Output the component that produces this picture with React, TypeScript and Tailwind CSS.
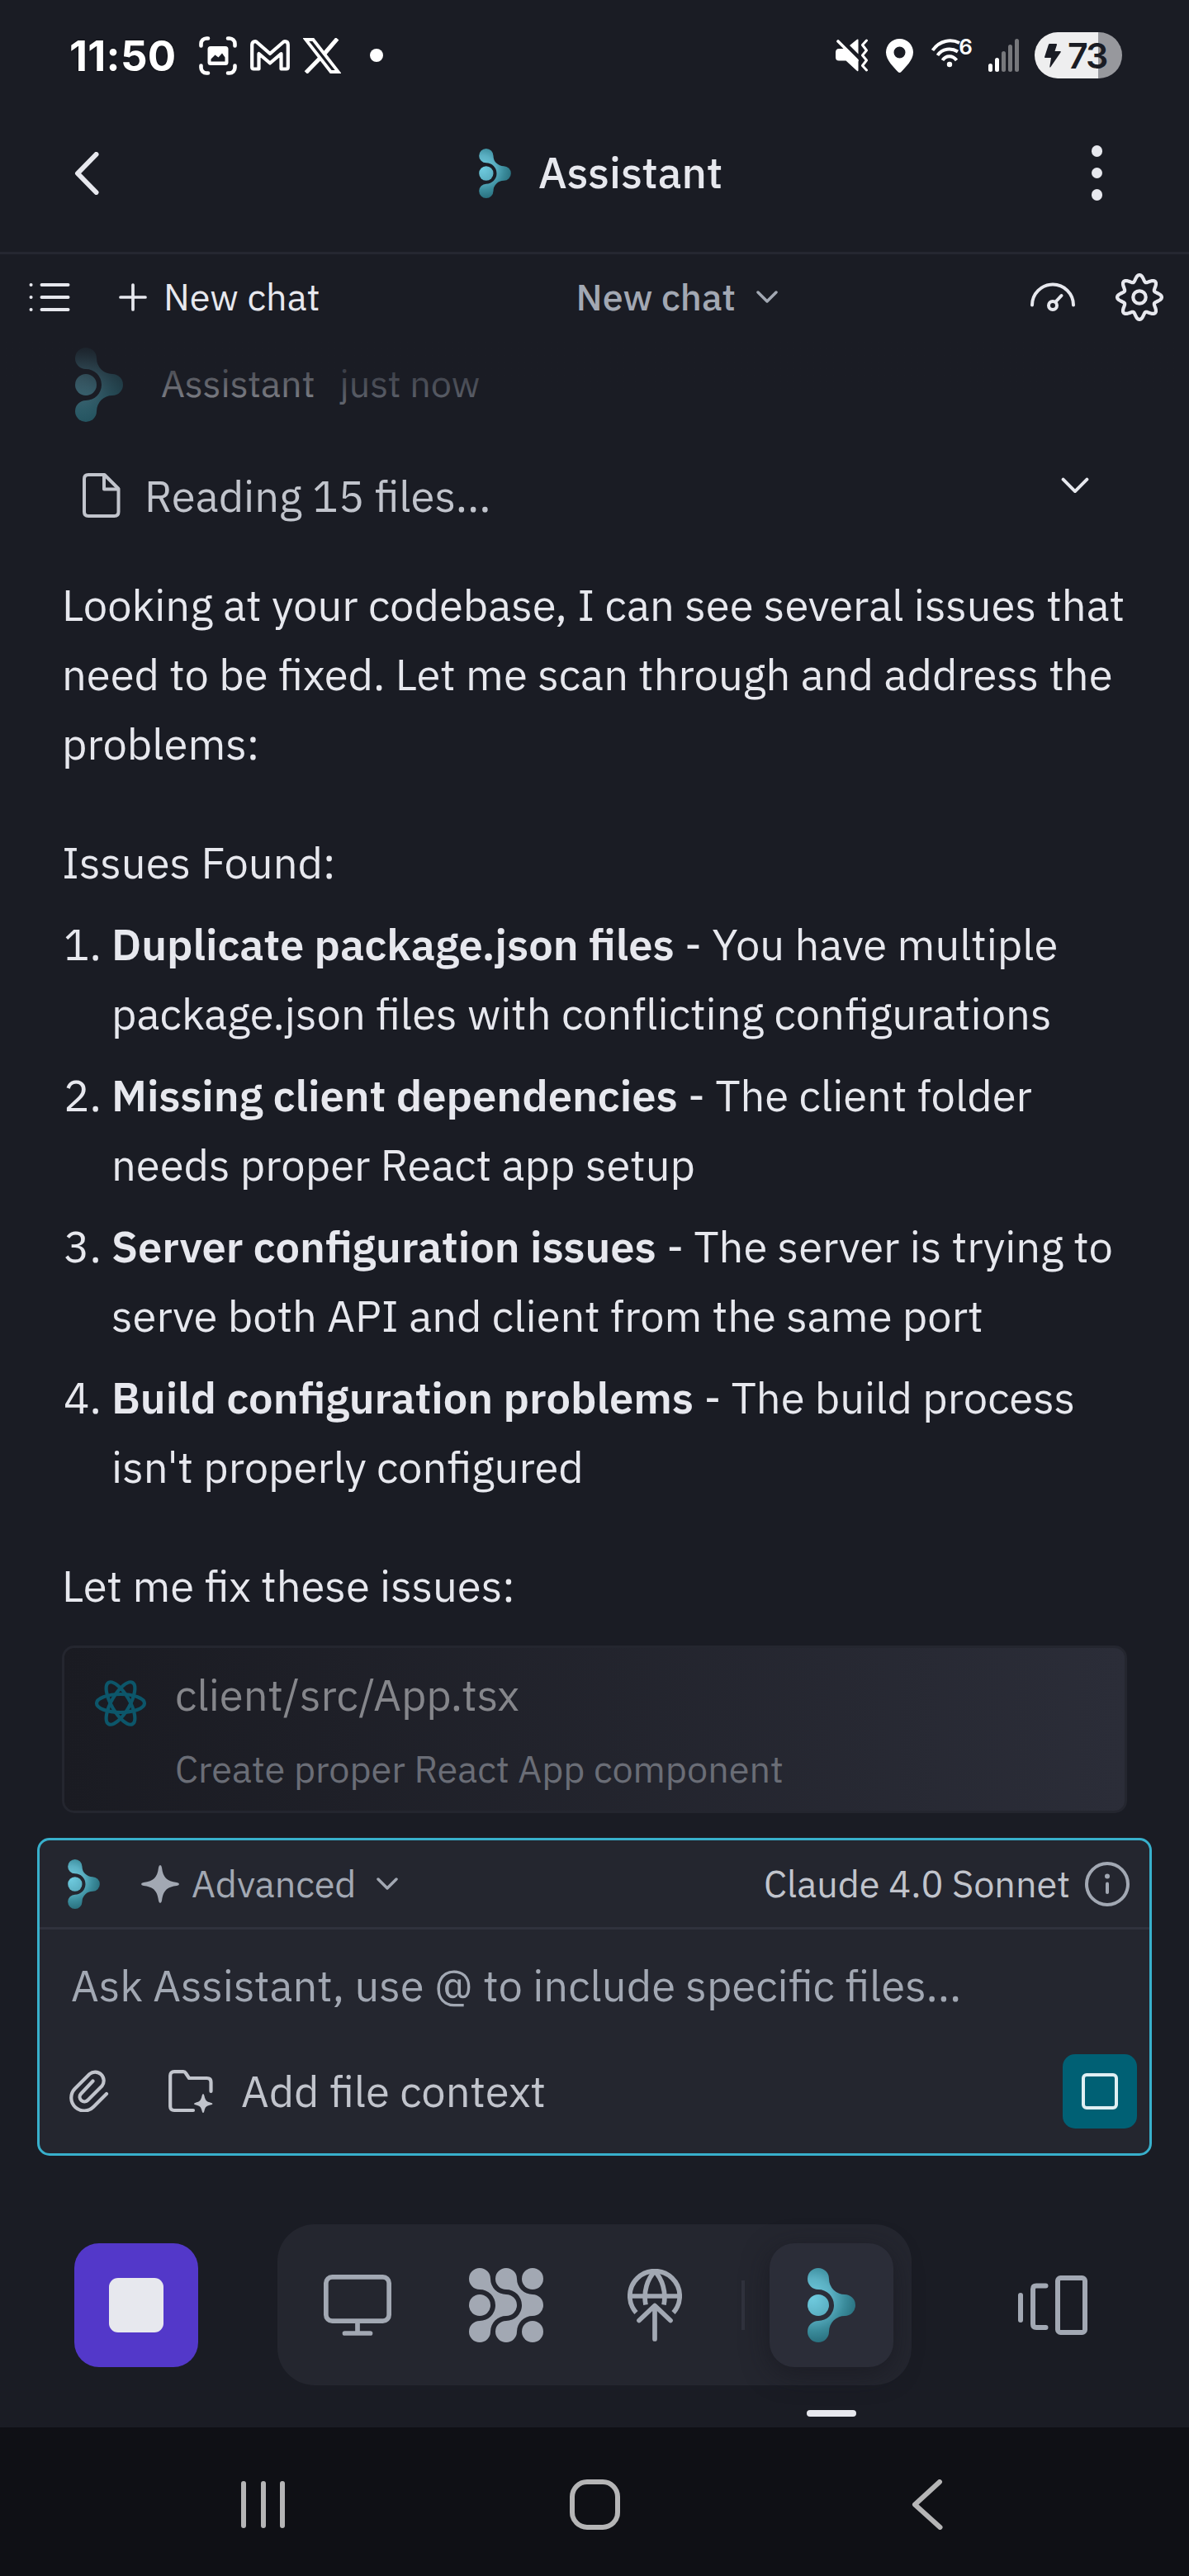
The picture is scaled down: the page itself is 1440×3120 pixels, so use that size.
import type { ReactNode } from 'react';

const LOBE_PATH =
  'M26 13A19 19 0 0 0 45 32A13 13 0 0 1 45 58A19 19 0 0 0 26 77A13 13 0 1 1 13 64A19 19 0 0 0 13 26A13 13 0 1 1 26 13Z';

function AssistantLogo({ id, className }: { id: string; className: string }) {
  return (
    <svg viewBox="0 0 58 90" className={className} aria-hidden="true">
      <defs>
        <radialGradient id={id} gradientUnits="userSpaceOnUse" cx="6" cy="36" r="66">
          <stop offset="0" stopColor="#6fcbdf" />
          <stop offset="0.35" stopColor="#5bb0c3" />
          <stop offset="0.6" stopColor="#3b8c9c" />
          <stop offset="1" stopColor="#1c5b68" />
        </radialGradient>
      </defs>
      <g fill={`url(#${id})`}>
        <path d={LOBE_PATH} />
        <circle cx="13" cy="45" r="13" />
      </g>
    </svg>
  );
}

const GEAR_PATH =
  Array.from({ length: 96 }, (_, i) => {
    const a = (i / 96) * Math.PI * 2;
    const r = 23.2 + 3.8 * Math.cos(a * 8);
    return `${i ? 'L' : 'M'}${(30 + r * Math.sin(a)).toFixed(2)} ${(30 - r * Math.cos(a)).toFixed(2)}`;
  }).join('') + 'Z';

function ChevronDown({ className, stroke = 3.5 }: { className: string; stroke?: number }) {
  return (
    <svg viewBox="0 0 26 16" className={className} fill="none" stroke="currentColor" strokeWidth={stroke} strokeLinecap="round" strokeLinejoin="round">
      <path d="M2 2L13 13L24 2" />
    </svg>
  );
}

function StatusBar() {
  return (
    <div className="flex h-[134px] items-center pr-[81px] pl-[84px]">
      <span className="w-[129px] font-[Inter] text-[51px] leading-none font-bold tracking-[0.3px] whitespace-nowrap text-white [text-shadow:0_0_2px_#000]">11:50</span>
      <svg viewBox="0 0 46 47" className="ml-[28px] h-[47px] w-[46px]" fill="none" stroke="#fff" strokeWidth="4.6" strokeLinecap="round">
        <path d="M2.5 11.5V9a6.5 6.5 0 0 1 6.5-6.5h2M35 2.5h2A6.5 6.5 0 0 1 43.5 9v2.5M43.5 35.5V38a6.5 6.5 0 0 1-6.5 6.5h-2M11 44.5H9A6.5 6.5 0 0 1 2.5 38v-2.5" />
        <rect x="10.5" y="12" width="25" height="23" rx="3.5" fill="#fff" stroke="none" />
        <path d="M14.5 30.5v-3l5-5 4 3 4.5-5 3.5 5v5z" fill="#1a1c24" stroke="none" />
      </svg>
      <svg viewBox="0 0 48 38" className="ml-[16px] h-[38px] w-[48px]" fill="none" stroke="#fff" strokeWidth="4.2" strokeLinejoin="round">
        <path d="M2.2 6.2Q2.2 2.2 6.2 2.2Q7.2 2.2 8.5 3.5L24 17L39.5 3.5Q40.8 2.2 42 2.2Q45.8 2.2 45.8 6.2V33.5Q45.8 35.5 43.8 35.5H37.5V17L24 28.5L10.500 17V35.500H4.200Q2.200 35.500 2.200 33.500Z" />
      </svg>
      <svg viewBox="0 0 46 43" className="ml-[16px] h-[43px] w-[46px]" fill="none" stroke="#fff" strokeWidth="3.8">
        <path d="M3.3 2H12.3L42.7 41H33.7Z" />
        <path d="M41.5 0.8L25.5 19.5M20 25L3.5 42" strokeWidth="5" />
      </svg>
      <span className="ml-[35px] size-4 rounded-full bg-white" />
      <div className="ml-auto flex items-center">
        <svg viewBox="0 0 40 40" className="h-[40px] w-[40px]" fill="#fff">
          <path d="M0 16.500Q0 12 4 12H12L27.500 26.500V38Q27.500 40 25.800 38.700L12.500 26.500H4Q0 26.500 0 22.500Z" />
          <path d="M17 8L26 0.800Q27.500 0 27.500 1.500V18.500Z" />
          <path d="M3 3L26 26" stroke="#fff" strokeWidth="3.600" strokeLinecap="round" />
          <path d="M37.500 2L32.500 7.500L37.500 14L32.500 20L37.500 26L32.500 32.500L37.500 38" fill="none" stroke="#fff" strokeWidth="3" strokeLinecap="round" strokeLinejoin="round" />
        </svg>
        <svg viewBox="0 0 33 41" className="ml-[21px] h-[41px] w-[33px]" fill="#fff">
          <path fillRule="evenodd" d="M16.5 0A16.3 16.3 0 0 0 0 16.5C0 26 10 35 14.5 40Q16.5 41.8 18.5 40C23 35 33 26 33 16.5A16.3 16.3 0 0 0 16.5 0ZM16.5 9.5a7 7 0 1 1 0 14a7 7 0 0 1 0-14Z" />
        </svg>
        <div className="relative ml-[22px] h-[40px] w-[50px]">
          <svg viewBox="0 0 50 40" className="h-[40px] w-[50px]" fill="none" stroke="#fff" strokeWidth="4">
            <path d="M1.5 14C10 1.500 24 0 34 5M7.500 20C13 11.500 24 10.500 32 15.500M13.500 26C17.500 19.500 26 19.500 30.500 26" />
            <circle cx="22" cy="31" r="3.2" fill="#fff" stroke="none" />
          </svg>
          <span className="absolute top-0 right-0 font-[Inter] text-[26px] leading-[20px] font-semibold text-white">6</span>
        </div>
        <div className="ml-[19px] flex h-[40px] items-end gap-[3px]">
          <span className="h-[10px] w-[5px] rounded-full bg-white" />
          <span className="h-[17px] w-[5px] rounded-full bg-white" />
          <span className="h-[25px] w-[5px] rounded-full bg-[#77787c]" />
          <span className="h-[33px] w-[5px] rounded-full bg-[#77787c]" />
          <span className="h-[40px] w-[5px] rounded-full bg-[#77787c]" />
        </div>
        <div className="ml-[19px] flex h-[56px] w-[106px] items-center rounded-full bg-[linear-gradient(90deg,#eeeeef_0_77px,#97989d_77px)] pl-[12px] text-[#1a1c24]">
          <svg viewBox="0 0 20 29" className="h-[29px] w-[20px]" fill="currentColor">
            <path d="M5 0.800Q5.400 0 6.300 0H14Q15.400 0 15 1.300L12.500 9H18.800Q20.500 9 19.500 10.500L7.500 28Q6.300 29.500 6.300 27.500L8 17H1.200Q-0.300 17 0.200 15.500Z" />
          </svg>
          <span className="ml-[8px] font-[Inter] text-[43px] leading-none font-semibold tracking-[-2px]">73</span>
        </div>
      </div>
    </div>
  );
}

function Header() {
  return (
    <div className="grid h-[174px] grid-cols-[1fr_auto_1fr] items-center border-b-[3px] border-[#252731] pr-[105px] pb-[20px] pl-[90px]">
      <svg viewBox="0 0 30 52" className="h-[52px] w-[30px]" fill="none" stroke="#e7e8ee" strokeWidth="6" strokeLinecap="round" strokeLinejoin="round">
        <path d="M26.5 3L4 26L26.5 49" />
      </svg>
      <div className="ml-[30px] flex items-center">
        <AssistantLogo id="logo-title" className="h-[60px] w-[39px]" />
        <span className="mb-[3px] ml-[33px] text-[52.5px] leading-[68px] font-medium">Assistant</span>
      </div>
      <div className="flex flex-col items-center gap-[13px] justify-self-end">
        <span className="size-[13.5px] rounded-full bg-[#e7e8ee]" />
        <span className="size-[13.5px] rounded-full bg-[#e7e8ee]" />
        <span className="size-[13.5px] rounded-full bg-[#e7e8ee]" />
      </div>
    </div>
  );
}

function ChatToolbar() {
  return (
    <div className="flex h-[104px] items-center pr-[30px] pl-[35px] text-[45px] leading-[60px]">
      <svg viewBox="0 0 50 36" className="h-[36px] w-[50px]" fill="none" stroke="#e7e8ee" strokeWidth="4" strokeLinecap="round">
        <path d="M15.5 3H47.5M15.5 18H47.5M15.5 33H47.5M2.5 3h0.1M2.5 18h0.1M2.5 33h0.1" />
      </svg>
      <svg viewBox="0 0 34 34" className="ml-[59px] h-[34px] w-[34px]" fill="none" stroke="#e7e8ee" strokeWidth="3.7" strokeLinecap="round">
        <path d="M17 2V32M2 17H32" />
      </svg>
      <span className="mb-[2px] ml-[20px]">New chat</span>
      <span className="mb-[2px] ml-[310px] font-medium text-[#a2a8b3]">New chat</span>
      <ChevronDown className="ml-[25px] h-[16px] w-[26px] text-[#a2a8b3]" />
      <svg viewBox="0 0 54 36" className="ml-auto h-[36px] w-[54px]" fill="none" stroke="#e7e8ee" strokeWidth="4" strokeLinecap="round">
        <path d="M2 27.5a25 25 0 0 1 50 0" />
        <circle cx="27" cy="28" r="5" />
        <path d="M30.5 23.5L37.5 16" />
      </svg>
      <svg viewBox="0 0 60 60" className="ml-[48px] h-[60px] w-[60px]" fill="none" stroke="#e7e8ee" strokeWidth="4.2" strokeLinejoin="round">
        <path d={GEAR_PATH} />
        <circle cx="30" cy="30" r="7.7" />
      </svg>
    </div>
  );
}

const ISSUES = [
  { title: 'Duplicate package.json files', first: 'You have multiple', rest: 'package.json files with conflicting configurations' },
  { title: 'Missing client dependencies', first: 'The client folder', rest: 'needs proper React app setup' },
  { title: 'Server configuration issues', first: 'The server is trying to', rest: 'serve both API and client from the same port' },
  { title: 'Build configuration problems', first: 'The build process', rest: "isn't properly configured" },
];

function Conversation() {
  return (
    <div className="relative h-[1814px] overflow-hidden px-[75px]">
      <div className="flex h-[108px] items-center pl-[16px] text-[45px] leading-[60px]">
        <AssistantLogo id="logo-message" className="h-[90px] w-[58px]" />
        <span className="mb-[4px] ml-[46px]">Assistant</span>
        <span className="mb-[4px] ml-[30px] text-[#a2a8b3]">just now</span>
      </div>
      <div className="pointer-events-none absolute inset-x-0 top-0 h-[150px] bg-linear-to-b from-[#1a1c24] to-[#1a1c24]/0" />

      <div className="mt-[38px] flex h-[84px] items-center pl-[25px]">
        <svg viewBox="0 0 46 54" className="h-[54px] w-[46px]" fill="none" stroke="#c1c4cc" strokeWidth="4" strokeLinejoin="round">
          <path d="M7 2H26.5L43.5 19V47Q43.5 52 38.5 52H7Q2 52 2 47V7Q2 2 7 2Z" />
          <path d="M26 2V19.5H43.5" />
        </svg>
        <span className="ml-[29px] text-[#c1c4cc]">Reading 15 files...</span>
        <ChevronDown className="mr-[46px] mb-[23px] ml-auto h-[21px] w-[34px] text-[#e7e8ee]" stroke={3} />
      </div>

      <p className="mt-[48px]">
        Looking at your codebase, I can see several issues that
        <br />
        need to be fixed. Let me scan through and address the
        <br />
        problems:
      </p>
      <p className="mt-[60px]">Issues Found:</p>
      <ol className="mt-[15px] flex flex-col gap-[15px]">
        {ISSUES.map((issue, i) => (
          <li key={issue.title} className="flex">
            <span className="w-[60px] shrink-0 pl-[2px]">{i + 1}.</span>
            <span>
              <strong className="font-semibold">{issue.title}</strong> - {issue.first}
              <br />
              {issue.rest}
            </span>
          </li>
        ))}
      </ol>
      <p className="mt-[60px]">Let me fix these issues:</p>

      <div className="mt-[31px] flex h-[203px] rounded-[15px] border-[3px] border-[#24262f] bg-linear-to-r from-[#1a1b22] to-[#2b2d38] pl-[36px]">
        <svg viewBox="-32 -29 64 58" className="mt-[38px] h-[58px] w-[64px]" fill="none" stroke="#0c566a" strokeWidth="4.2">
          <ellipse rx="29" ry="11" />
          <ellipse rx="29" ry="11" transform="rotate(60)" />
          <ellipse rx="29" ry="11" transform="rotate(120)" />
        </svg>
        <div className="mt-[11px] ml-[34px]">
          <p className="leading-[90px] text-[#85868b]">client/src/App.tsx</p>
          <p className="mt-[2px] text-[45px] leading-[86px] text-[#6a6d76]">Create proper React App component</p>
        </div>
      </div>
    </div>
  );
}

function Composer() {
  return (
    <div className="mx-[45px] h-[385px] rounded-[15px] border-[3px] border-[#38b0cc] bg-[#24262f]">
      <div className="flex h-[108px] items-center border-b-[3px] border-[#30323d] pr-[24px] pl-[34px] text-[45px] leading-[60px]">
        <AssistantLogo id="logo-composer" className="h-[60px] w-[39px]" />
        <svg viewBox="0 0 46 46" className="ml-[50px] h-[46px] w-[46px]" fill="#a2a8b3">
          <path d="M23 0Q24.5 0 25 3C26.5 15 31 19.5 43 21Q46 21.5 46 23Q46 24.5 43 25C31 26.5 26.5 31 25 43Q24.5 46 23 46Q21.5 46 21 43C19.5 31 15 26.5 3 25Q0 24.5 0 23Q0 21.5 3 21C15 19.5 19.5 15 21 3Q21.5 0 23 0Z" />
        </svg>
        <span className="mb-[2px] ml-[15px] text-[#a2a8b3]">Advanced</span>
        <ChevronDown className="ml-[25px] h-[16px] w-[26px] text-[#a2a8b3]" />
        <span className="mb-[2px] ml-auto text-[#c1c4cc]">Claude 4.0 Sonnet</span>
        <svg viewBox="0 0 54 54" className="ml-[18px] h-[54px] w-[54px]" fill="none" stroke="#a2a8b3" strokeWidth="4" strokeLinecap="round">
          <circle cx="27" cy="27" r="25" />
          <path d="M27 26.5V37" />
          <circle cx="27" cy="17.5" r="3" fill="#a2a8b3" stroke="none" />
        </svg>
      </div>
      <p className="mt-[25px] pl-[38px] text-[#a2a8b3]">Ask Assistant, use @ to include specific files...</p>
      <div className="mt-[42px] flex h-[90px] items-center pr-[15px] pl-[36px] text-[#c1c4cc]">
        <svg viewBox="0 0 48 52" className="mb-[2px] h-[52px] w-[48px]" fill="none" stroke="currentColor" strokeWidth="4.2" strokeLinecap="round" strokeLinejoin="round">
          <path d="M45 30L29.5 45.5A15.5 15.5 0 0 1 6.5 24L24.5 6A10.5 10.5 0 0 1 39.5 20.5L22.5 37.5A5.5 5.5 0 0 1 14 30L28.5 14.5" />
        </svg>
        <svg viewBox="0 0 54 52" className="ml-[72px] h-[52px] w-[54px]" fill="none" stroke="currentColor" strokeWidth="4.2" strokeLinecap="round" strokeLinejoin="round">
          <path d="M30 49H7Q2.2 49 2.2 44.2V7Q2.2 2.2 7 2.2H18Q20 2.2 21 4L25 10H46.5Q51.5 10 51.5 15V26" />
          <path d="M42 29Q43 29 43.5 31.5C44.5 36.5 46 38.5 50.5 39.5Q53.5 40 53.5 41Q53.5 42 50.5 42.5C46 43.5 44.5 45 43.5 49.5Q43 52 42 52Q41 52 40.5 49.5C39.5 45 38 43.5 33.5 42.5Q31 42 31 41Q31 40 33.5 39.5C38 38.5 39.5 36.5 40.5 31.5Q41 29 42 29Z" fill="currentColor" stroke="none" />
        </svg>
        <span className="mb-[2px] ml-[34px]">Add file context</span>
        <div className="ml-auto flex size-[90px] items-center justify-center rounded-[15px] bg-[#006074]">
          <div className="size-[44px] rounded-[6px] border-4 border-[#e0eff3]" />
        </div>
      </div>
    </div>
  );
}

function Tab({ children, active = false }: { children: ReactNode; active?: boolean }) {
  return (
    <div
      className={
        active
          ? 'flex size-[150px] items-center justify-center rounded-[30px] bg-[#2b2d38] shadow-[0_8px_32px_rgba(20,20,28,0.55)]'
          : 'flex size-[150px] items-center justify-center'
      }
    >
      {children}
    </div>
  );
}

function Dock() {
  return (
    <div className="flex h-[329px] items-start pt-[83px] pl-[90px]">
      <div className="mt-[23px] flex size-[150px] items-center justify-center rounded-[30px] bg-[#5338c9]">
        <div className="size-[66px] rounded-[11px] bg-[#e7e8ee]" />
      </div>
      <div className="ml-[96px] flex h-[195px] items-center gap-[30px] rounded-[45px] bg-[#24262f] px-[22px]">
        <Tab>
          <svg viewBox="0 0 82 74" className="h-[74px] w-[82px]" fill="none" stroke="#a2a8b3" strokeWidth="5.7" strokeLinecap="round">
            <rect x="2.85" y="2.85" width="76.3" height="53.3" rx="7.5" />
            <path d="M41 57V71M25.5 71H56.5" />
          </svg>
        </Tab>
        <Tab>
          <svg viewBox="0 0 90 90" className="size-[90px]" fill="#a2a8b3">
            <path d={LOBE_PATH} />
            <path d={LOBE_PATH} transform="translate(32 0)" />
            <circle cx="13" cy="45" r="13" />
            <circle cx="77" cy="13" r="13" />
            <circle cx="77" cy="77" r="13" />
          </svg>
        </Tab>
        <Tab>
          <svg viewBox="0 0 66 88" className="h-[88px] w-[66px]" fill="none" stroke="#a2a8b3" strokeWidth="5.7" strokeLinejoin="round">
            <path d="M10.5 53A30.2 30.2 0 1 1 55.5 53" />
            <path d="M3 33H63" />
            <path d="M22 43.5C19 28 24 12 33 3C42 12 47 28 44 43.5" />
            <path d="M33 85V45M14 62.5L33 44.5L52 62.5" strokeLinecap="round" />
          </svg>
        </Tab>
        <span className="h-[60px] w-[4px] bg-[#30323d]" />
        <div className="relative">
          <Tab active>
            <AssistantLogo id="logo-dock" className="h-[90px] w-[58px]" />
          </Tab>
          <span className="absolute top-[202px] left-[45px] h-[8px] w-[60px] rounded-full bg-[#e7e8ee]" />
        </div>
      </div>
      <svg viewBox="0 0 84 72" className="mt-[62px] ml-[129px] h-[72px] w-[84px]" fill="none" stroke="#a2a8b3" strokeWidth="6" strokeLinecap="round" strokeLinejoin="round">
        <path d="M3 24V54" />
        <path d="M33.5 12.5H22Q18 12.5 18 16.5V59Q18 63 22 63H33.5" />
        <rect x="48" y="3" width="33" height="66" rx="3.5" />
      </svg>
    </div>
  );
}

function SystemNav() {
  return (
    <div className="flex h-[180px] bg-[#0f1015] pt-[63px] pl-[292px]">
      <div className="mt-[2px] flex h-[57px] gap-[17.5px]">
        <span className="w-[6px] rounded-full bg-[#b5b5b6]" />
        <span className="w-[6px] rounded-full bg-[#b5b5b6]" />
        <span className="w-[6px] rounded-full bg-[#b5b5b6]" />
      </div>
      <span className="ml-[345px] size-[61px] rounded-[21px] border-[6px] border-[#b5b5b6]" />
      <svg viewBox="0 0 38 61" className="ml-[353px] h-[61px] w-[38px]" fill="none" stroke="#b5b5b6" strokeWidth="6" strokeLinecap="round" strokeLinejoin="round">
        <path d="M34 3L4 30.5L34.5 58" />
      </svg>
    </div>
  );
}

export default function App() {
  return (
    <div className="flex h-[3120px] w-[1440px] flex-col overflow-hidden bg-[#1a1c24] font-['IBM_Plex_Sans','Noto_Sans',sans-serif] text-[52.5px] leading-[84px] text-[#e7e8ee]">
      <StatusBar />
      <Header />
      <ChatToolbar />
      <Conversation />
      <Composer />
      <Dock />
      <SystemNav />
    </div>
  );
}
